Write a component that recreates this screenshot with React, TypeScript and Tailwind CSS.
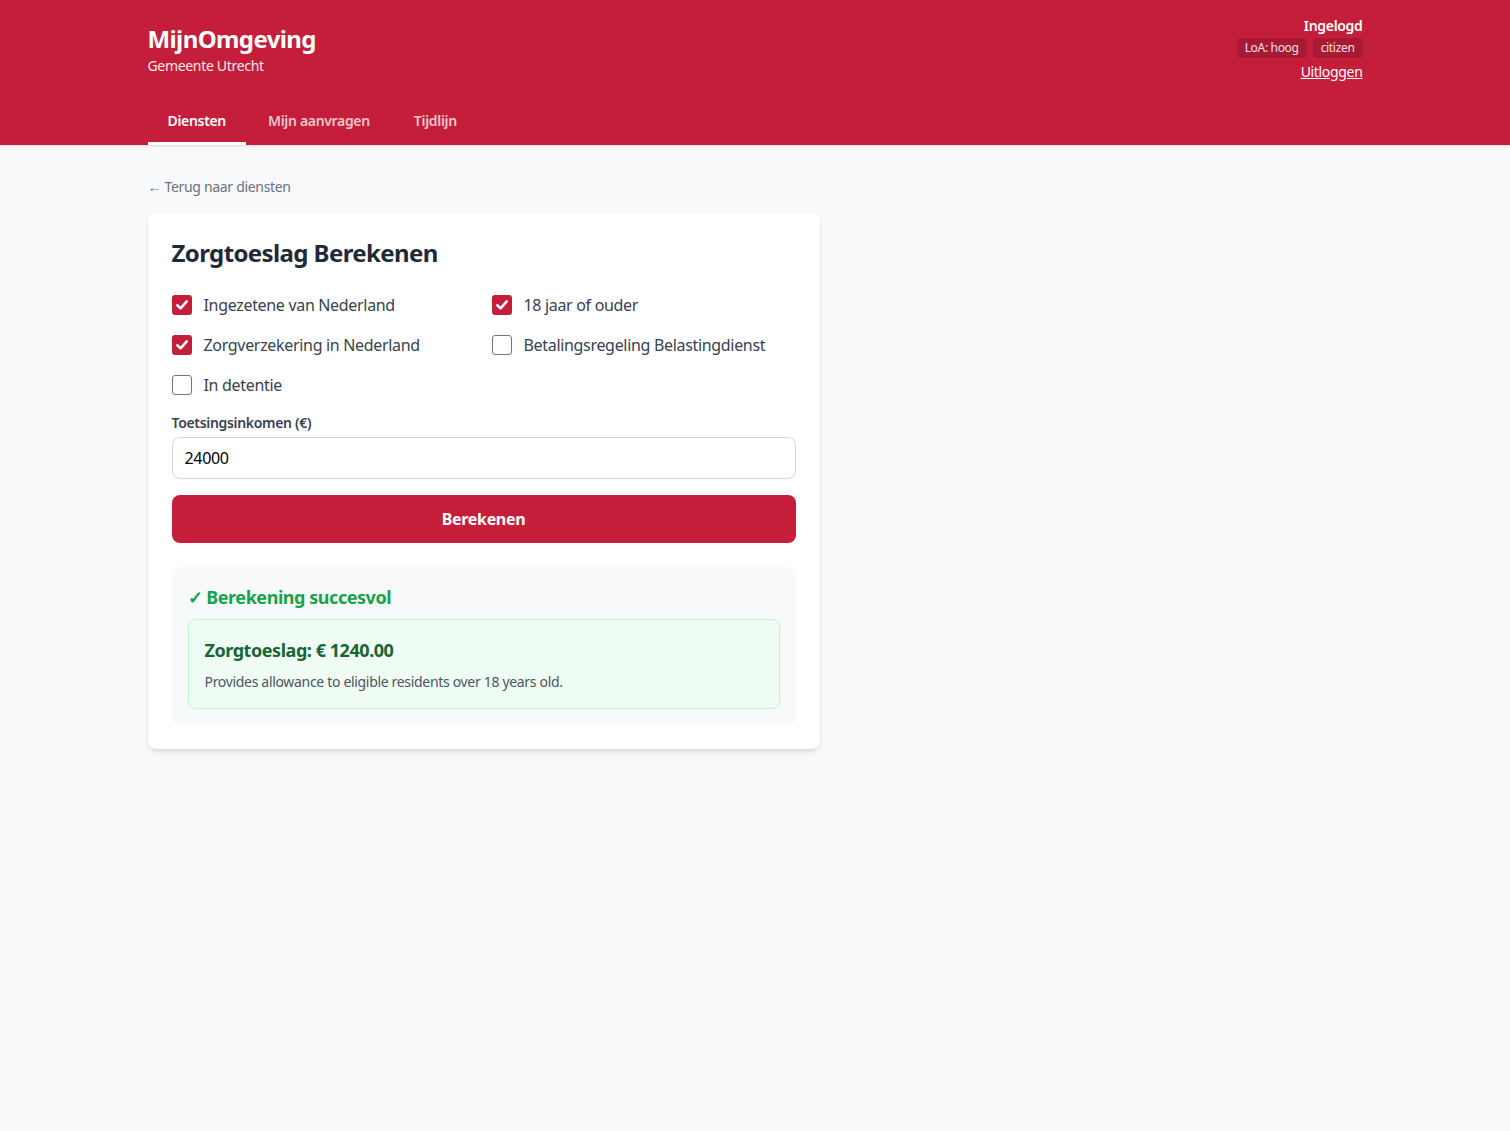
import React from "react";

function Check({ checked, label }: { checked: boolean; label: string }) {
  return (
    <label className="flex items-center gap-3 h-10">
      {checked ? (
        <span className="w-5 h-5 rounded-[3px] bg-[#c41e3a] flex items-center justify-center">
          <svg width="14" height="14" viewBox="0 0 14 14" fill="none">
            <path d="M2.3 7.3 L5.6 10.4 L11.7 3.4" stroke="white" strokeWidth="2.6" strokeLinecap="round" strokeLinejoin="round" />
          </svg>
        </span>
      ) : (
        <span className="w-5 h-5 rounded-[3px] border border-[#767676] bg-white" />
      )}
      <span className="text-base text-[#374151]">{label}</span>
    </label>
  );
}

export default function App() {
  return (
    <div className="min-h-screen bg-[#f8f9fb] tracking-[-0.32px]" style={{ fontFamily: '"Noto Sans", "Open Sans", sans-serif' }}>
      <header className="bg-[#c41e3a] text-white shadow">
        <div className="w-[1215px] mx-auto">
          <div className="flex justify-between items-start pt-[16px]">
            <div className="pt-[7px]">
              <div className="text-[24px] font-bold leading-[32px] tracking-[-0.6px]">MijnOmgeving</div>
              <div className="text-[14px] leading-5 opacity-90 mt-[1px]">Gemeente Utrecht</div>
            </div>
            <div className="flex flex-col items-end">
              <div className="text-[14px] font-semibold leading-5">Ingelogd</div>
              <div className="flex gap-[6px] mt-[2px]">
                <span className="text-[12px] leading-[20px] px-2 rounded bg-[#a81a33] text-white/85">LoA: hoog</span>
                <span className="text-[12px] leading-[20px] px-2 rounded bg-[#a81a33] text-white/85">citizen</span>
              </div>
              <a className="text-[14px] leading-5 underline mt-[4px]">Uitloggen</a>
            </div>
          </div>
          <nav className="flex mt-[19px]">
            <div className="px-5 h-[44px] flex items-center text-[14px] font-semibold border-b-[3px] border-white pb-[2px]">Diensten</div>
            <div className="px-[22px] h-[44px] flex items-center text-[14px] font-semibold text-white/75 border-b-[3px] border-transparent pb-[2px]">Mijn aanvragen</div>
            <div className="px-[22px] h-[44px] flex items-center text-[14px] font-semibold text-white/75 border-b-[3px] border-transparent pb-[2px]">Tijdlijn</div>
          </nav>
        </div>
      </header>
      <main className="w-[1215px] mx-auto pt-[32px]">
        <a className="text-[14px] text-[#6b7280] leading-5 block"><span className="text-[14px]">←</span> Terug naar diensten</a>
        <div className="w-[672px] bg-white rounded-lg shadow-md mt-[16px] p-6">
          <h1 className="text-[24px] font-bold text-[#1f2937] leading-8 tracking-[-0.6px]">Zorgtoeslag Berekenen</h1>
          <div className="grid grid-cols-2 gap-x-4 mt-[16px]">
            <Check checked label="Ingezetene van Nederland" />
            <Check checked label="18 jaar of ouder" />
            <Check checked label="Zorgverzekering in Nederland" />
            <Check checked={false} label="Betalingsregeling Belastingdienst" />
            <Check checked={false} label="In detentie" />
          </div>
          <div className="mt-[8px] text-[14px] font-semibold text-[#374151] leading-5">Toetsingsinkomen (€)</div>
          <div className="mt-[4px] h-[42px] border border-[#d1d5db] rounded-lg flex items-center px-3 text-base text-black">24000</div>
          <button className="mt-4 w-full h-12 rounded-lg bg-[#c41e3a] text-white font-bold text-base">Berekenen</button>
          <div className="mt-6 bg-[#f8f9fb] rounded-lg p-4">
            <div className="text-[18px] font-bold text-[#16a34a] leading-7 tracking-[-0.45px]">✓ Berekening succesvol</div>
            <div className="mt-[8px] bg-[#f0fdf4] border border-[#bbf7d0] rounded-lg p-4">
              <div className="text-[18px] font-bold text-[#166534] leading-7 tracking-[-0.45px]">Zorgtoeslag: € 1240.00</div>
              <div className="text-[14px] text-[#4b5563] leading-5 mt-[8px]">Provides allowance to eligible residents over 18 years old.</div>
            </div>
          </div>
        </div>
      </main>
    </div>
  );
}
